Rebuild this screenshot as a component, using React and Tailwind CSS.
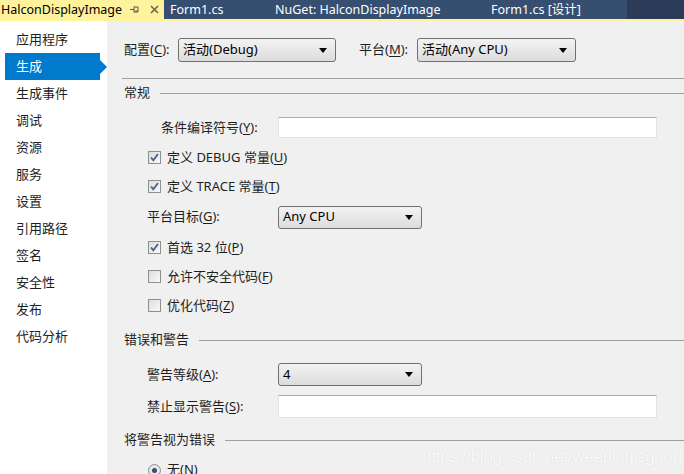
import React from 'react'

const FONT = { fontFamily: '"Segoe UI", "Noto Sans", "Noto Sans CJK SC", sans-serif' }

const navItems = ['应用程序', '生成', '生成事件', '调试', '资源', '服务', '设置', '引用路径', '签名', '安全性', '发布', '代码分析']

function U({ children }) {
  return <span className="underline underline-offset-2">{children}</span>
}

function Select({ value, width }) {
  return (
    <div
      className={`${width} h-full flex items-center justify-between pl-[4px] pr-[8px] rounded-[3px] border border-[#707070] bg-gradient-to-b from-[#f3f3f3] to-[#dcdcdc] text-[13px] text-black`}
    >
      <span>{value}</span>
      <svg width="8" height="5" viewBox="0 0 8 5">
        <path d="M0 0h8L4 5z" fill="#000" />
      </svg>
    </div>
  )
}

function TextBox({ width }) {
  return <div className={`${width} h-full bg-white border border-[#e3e3e3] border-t-[#abadb3]`} />
}

function Check({ checked, children }) {
  return (
    <div className="h-[29px] flex items-center pl-[26px] gap-[6px]">
      <div className="w-[13px] h-[13px] border border-[#8e8f8f] bg-gradient-to-br from-[#dcdcdc] to-[#fafafa] flex items-center justify-center">
        {checked && (
          <svg width="9" height="9" viewBox="0 0 9 9">
            <path d="M1 4.5l2.3 2.7L8 1" stroke="#4a5f97" strokeWidth="1.8" fill="none" />
          </svg>
        )}
      </div>
      <span className="text-[13px] text-[#1e1e1e]">{children}</span>
    </div>
  )
}

function Section({ title }) {
  return (
    <div className="h-[18px] flex items-center gap-[10px] pl-[2px]">
      <span className="text-[13px] text-[#1e1e1e] whitespace-nowrap">{title}</span>
      <div className="flex-1 h-px bg-[#a0a0a0]" />
    </div>
  )
}

function FieldRow({ label, labelPad, height, children }) {
  return (
    <div className={`${height} flex items-center`}>
      <div className={`w-[156px] ${labelPad} text-[13px] text-[#1e1e1e] whitespace-nowrap`}>{label}</div>
      <div className="h-full flex items-center">{children}</div>
    </div>
  )
}

export default function App() {
  return (
    <div className="w-[684px] h-[474px] overflow-hidden relative bg-[#f0f0f0] flex flex-col" style={FONT}>
      {/* tab well */}
      <div className="h-[19px] flex shrink-0 bg-[#364e6f] text-[12.5px] leading-[19px]">
        <div className="w-[164px] bg-[#fff29d] text-black flex items-center">
          <span className="pl-[1px] w-[130px]">HalconDisplayImage</span>
          <svg width="11" height="9" viewBox="0 0 11 9">
            <path d="M0 4.5h4M4 1.5v6M4 2h4v5H4M5 6h3" stroke="#5b5b45" strokeWidth="1" fill="none" />
          </svg>
          <svg className="ml-[9px]" width="9" height="9" viewBox="0 0 9 9">
            <path d="M1 1l7 7M8 1L1 8" stroke="#6b6648" strokeWidth="1.6" />
          </svg>
        </div>
        <div className="w-[463px] flex text-white">
          <span className="pl-[6px] w-[111px]">Form1.cs</span>
          <span className="w-[216px]">NuGet: HalconDisplayImage</span>
          <span>Form1.cs [设计]</span>
        </div>
        <div className="flex-1 bg-[#2b3b58]" />
      </div>
      <div className="h-[2px] shrink-0 bg-[#fff29d]" />

      <div className="flex-1 flex">
        {/* left nav */}
        <div className="w-[107px] bg-white pt-[5px] flex flex-col">
          {navItems.map((item) => (
            <div key={item} className="h-[27px] flex items-center">
              {item === '生成' ? (
                <div className="flex items-center h-full">
                  <div className="ml-[5px] w-[95px] h-full bg-[#007acc] text-white text-[13px] pl-[11px] flex items-center">
                    {item}
                  </div>
                  <div className="w-0 h-0 border-y-[7px] border-y-transparent border-l-[7px] border-l-[#007acc]" />
                </div>
              ) : (
                <span className="pl-[16px] text-[13px] text-[#1e1e1e]">{item}</span>
              )}
            </div>
          ))}
        </div>

        {/* content */}
        <div className="flex-1 flex flex-col pl-[15px] pt-[17px]">
          <div className="h-[24px] flex items-center text-[13px] text-[#1e1e1e]">
            <span className="pl-[2px] w-[56px]">配置(<U>C</U>):</span>
            <Select value="活动(Debug)" width="w-[158px]" />
            <span className="ml-[23px] w-[58px]">平台(<U>M</U>):</span>
            <Select value="活动(Any CPU)" width="w-[159px]" />
          </div>

          <div className="mt-[16px] h-px bg-[#a0a0a0]" />

          <div className="mt-[5px]">
            <Section title="常规" />
          </div>

          <div className="mt-[15px]">
            <FieldRow label={<>条件编译符号(<U>Y</U>):</>} labelPad="pl-[39px]" height="h-[21px]">
              <TextBox width="w-[379px]" />
            </FieldRow>
          </div>

          <div className="mt-[5px]">
            <Check checked>定义 DEBUG 常量(<U>U</U>)</Check>
            <Check checked>定义 TRACE 常量(<U>T</U>)</Check>
            <div className="h-[32px] flex items-center">
              <div className="w-[156px] pl-[25px] text-[13px] text-[#1e1e1e]">平台目标(<U>G</U>):</div>
              <div className="h-[23px]">
                <Select value="Any CPU" width="w-[144px]" />
              </div>
            </div>
            <Check checked>首选 32 位(<U>P</U>)</Check>
            <Check>允许不安全代码(<U>F</U>)</Check>
            <Check>优化代码(<U>Z</U>)</Check>
          </div>

          <div className="mt-[11px]">
            <Section title="错误和警告" />
          </div>

          <div className="mt-[14px]">
            <FieldRow label={<>警告等级(<U>A</U>):</>} labelPad="pl-[25px]" height="h-[23px]">
              <Select value="4" width="w-[144px]" />
            </FieldRow>
          </div>

          <div className="mt-[9px]">
            <FieldRow label={<>禁止显示警告(<U>S</U>):</>} labelPad="pl-[25px]" height="h-[23px]">
              <TextBox width="w-[379px]" />
            </FieldRow>
          </div>

          <div className="mt-[13px]">
            <Section title="将警告视为错误" />
          </div>

          <div className="mt-[12px] h-[18px] flex items-center pl-[26px] gap-[6px]">
            <div className="w-[13px] h-[13px] rounded-full border border-[#8e8f8f] bg-[#e8e8e8] flex items-center justify-center">
              <div className="w-[5px] h-[5px] rounded-full bg-[#3c4b7a]" />
            </div>
            <span className="text-[13px] text-[#1e1e1e]">无(<U>N</U>)</span>
          </div>
        </div>
      </div>

      {/* watermark */}
      <div
        className="absolute left-[422px] top-[444px] text-[17px] text-white/90 tracking-[-0.3px]"
        style={{ fontFamily: '"Liberation Sans", Arial, sans-serif', textShadow: '0 0 1px rgba(0,0,0,0.15)' }}
      >
        https://blog.csdn.net/weepingisgood
      </div>
    </div>
  )
}
